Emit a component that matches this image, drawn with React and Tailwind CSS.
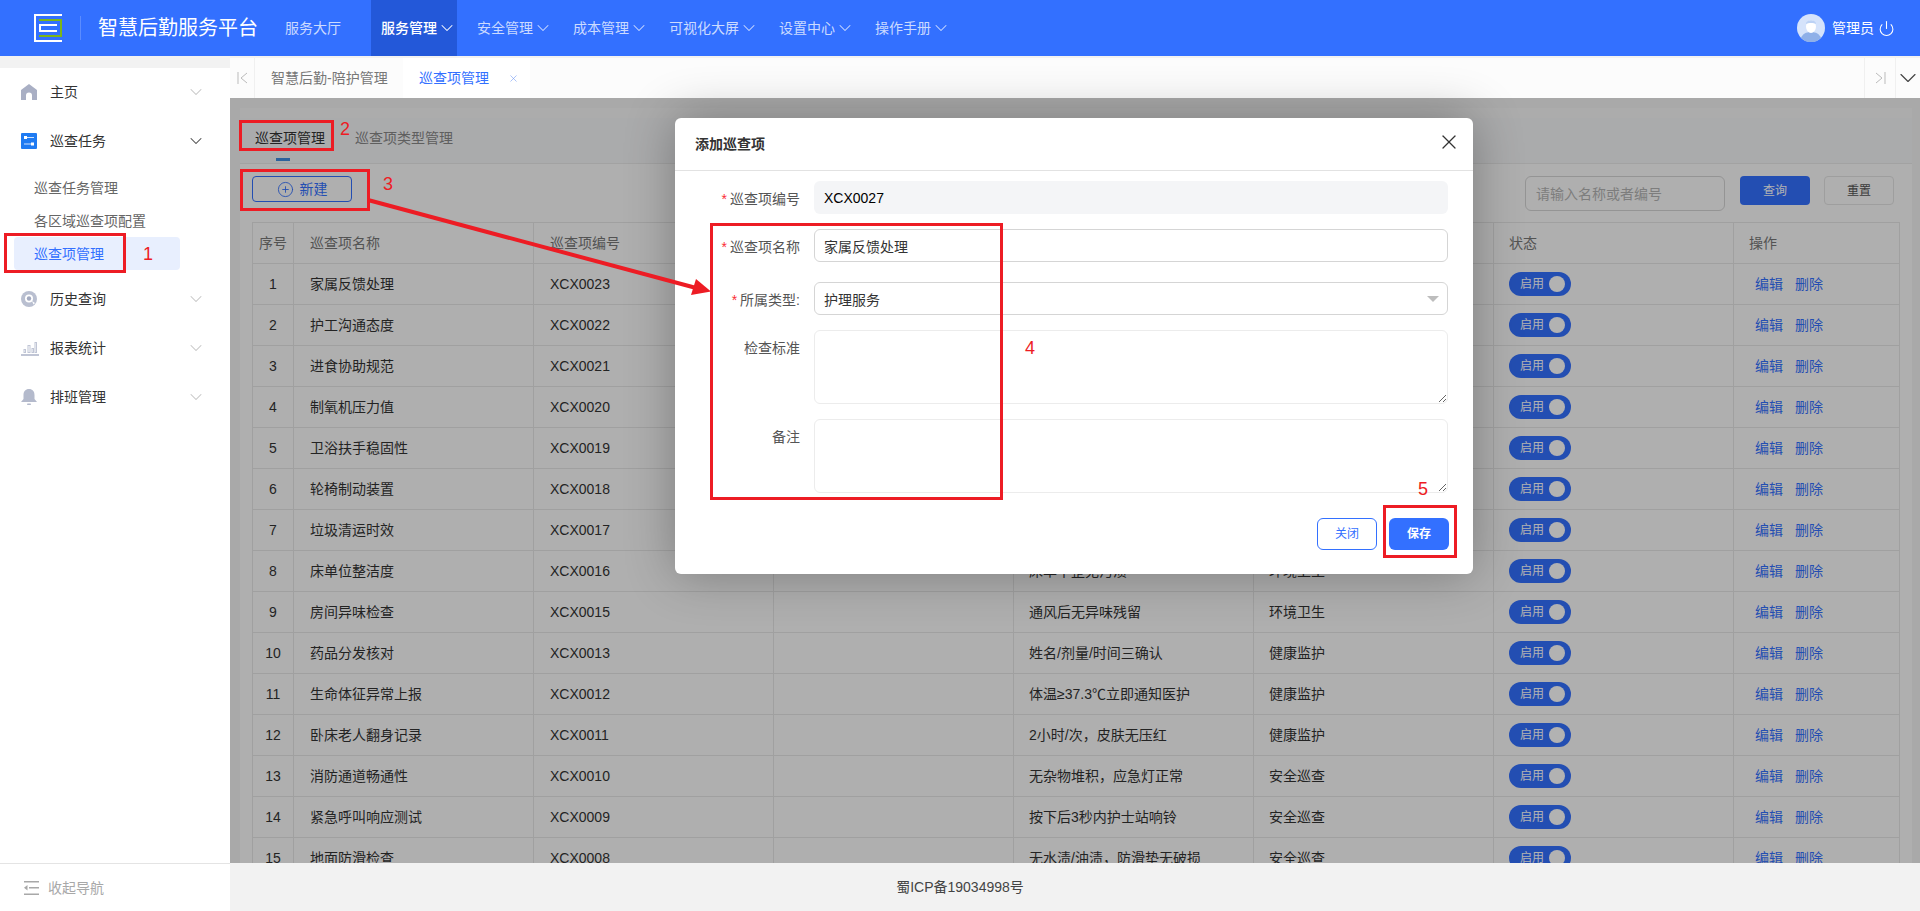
import { ChevronDown, CirclePlus, Power, X } from 'lucide-react';

const MENUS = [
  { label: '服务大厅', plain: true },
  { label: '服务管理', active: true },
  { label: '安全管理' },
  { label: '成本管理' },
  { label: '可视化大屏' },
  { label: '设置中心' },
  { label: '操作手册' },
];

const ROWS = [
  ['家属反馈处理', 'XCX0023', '及时响应家属意见', '护理服务'],
  ['护工沟通态度', 'XCX0022', '语气温和，耐心解答', '护理服务'],
  ['进食协助规范', 'XCX0021', '按流程协助进食', '护理服务'],
  ['制氧机压力值', 'XCX0020', '压力值在正常范围', '设备巡检'],
  ['卫浴扶手稳固性', 'XCX0019', '扶手无松动', '设备巡检'],
  ['轮椅制动装置', 'XCX0018', '制动灵敏有效', '设备巡检'],
  ['垃圾清运时效', 'XCX0017', '每日按时清运', '环境卫生'],
  ['床单位整洁度', 'XCX0016', '床单平整无污渍', '环境卫生'],
  ['房间异味检查', 'XCX0015', '通风后无异味残留', '环境卫生'],
  ['药品分发核对', 'XCX0013', '姓名/剂量/时间三确认', '健康监护'],
  ['生命体征异常上报', 'XCX0012', '体温≥37.3℃立即通知医护', '健康监护'],
  ['卧床老人翻身记录', 'XCX0011', '2小时/次，皮肤无压红', '健康监护'],
  ['消防通道畅通性', 'XCX0010', '无杂物堆积，应急灯正常', '安全巡查'],
  ['紧急呼叫响应测试', 'XCX0009', '按下后3秒内护士站响铃', '安全巡查'],
  ['地面防滑检查', 'XCX0008', '无水渍/油渍，防滑垫无破损', '安全巡查'],
];

const Logo = () => (
  <svg width="28" height="28" viewBox="0 0 28 28" fill="none">
    <path d="M28 1H1v26h27" stroke="#fff" strokeWidth="2" />
    <path d="M5 6h22v16H5" stroke="#7cb518" strokeWidth="2" />
    <path d="M23 11H6v6h17" stroke="#fff" strokeWidth="2" />
  </svg>
);

const HomeIcon = () => (
  <svg width="16" height="16" viewBox="0 0 16 16" fill="#a9afc4">
    <path d="M8 0 16 6v10h-5v-4.500a3 3 0 0 0-6 0V16H0V6z" />
  </svg>
);

const TaskIcon = () => (
  <svg width="16" height="16" viewBox="0 0 16 16">
    <rect width="16" height="16" rx="1" fill="#1f7bf2" />
    <rect x="3" y="3" width="3" height="3" fill="#fff" />
    <rect x="6" y="4" width="7" height="1" fill="#cfe2fd" />
    <rect x="3" y="10.500" width="7" height="1" fill="#cfe2fd" />
    <rect x="10" y="9.500" width="3" height="3" fill="#fff" />
  </svg>
);

const HistoryIcon = () => (
  <svg width="16" height="16" viewBox="0 0 16 16">
    <circle cx="8" cy="8" r="8" fill="#b9bfd0" />
    <circle cx="8" cy="7.500" r="4" fill="#fff" />
    <circle cx="8" cy="7.500" r="2.200" fill="#a3aac0" />
    <path d="M11 10l3 2-1.500 1.500z" fill="#fff" />
  </svg>
);

const ChartIcon = () => (
  <svg width="18" height="16" viewBox="0 0 18 16" fill="none" stroke="#c0c5d5">
    <rect x="3" y="9.500" width="1.500" height="3" />
    <rect x="7" y="5.500" width="2" height="7" />
    <rect x="11" y="8.500" width="1.500" height="4" />
    <rect x="14" y="2.500" width="1.500" height="10" />
    <rect x=".5" y="14.500" width="17" height="1" fill="#c0c5d5" />
  </svg>
);

const BellIcon = () => (
  <svg width="16" height="16" viewBox="0 0 16 16" fill="#b4bacc">
    <path d="M8 0c3.500 0 5.500 2.500 5.500 6v4L16 13H0L2.500 10V6C2.500 2.500 4.500 0 8 0z" />
    <rect x="6" y="14.500" width="4" height="1.500" rx=".7" />
  </svg>
);

const CollapseIcon = () => (
  <svg width="15" height="14" viewBox="0 0 15 14" fill="#a8a8a8">
    <rect width="15" height="1.500" />
    <rect x="5" y="6" width="10" height="1.500" />
    <rect y="12.500" width="15" height="1.500" />
    <path d="M3.500 4v5.500L0 6.800z" />
  </svg>
);

const Avatar = () => (
  <svg width="28" height="28" viewBox="0 0 28 28">
    <circle cx="14" cy="14" r="14" fill="#d5e3fb" />
    <path d="M4 24c1.500-4 5-6 10-6s8.500 2 10 6a14 14 0 0 1-20 0z" fill="#8fb0e8" />
    <ellipse cx="14" cy="12.500" rx="5" ry="6.500" fill="#fff" />
    <path d="M9 10c0-5 10-5 10 0-2-1.500-8-1.500-10 0z" fill="#bcd2f5" />
  </svg>
);

const SideItem = ({ icon, label, open }) => (
  <div className="h-[49px] flex items-center pl-[21px] pr-[24px]">
    <div className="w-[29px] shrink-0">{icon}</div>
    <span className="flex-1 text-sm text-[#333]">{label}</span>
    <ChevronDown size={20} strokeWidth={1.25} className={open ? 'text-[#444]' : 'text-[#c4c4c4]'} />
  </div>
);

const Switch = () => (
  <div className="w-[62px] h-6 rounded-full bg-[#3370ff] flex items-center pl-[11px] pr-[6px] justify-between">
    <span className="text-xs text-white">启用</span>
    <span className="w-4 h-4 rounded-full bg-white" />
  </div>
);

const Field = ({ label, required, className, children }) => (
  <div className={`flex ${className}`}>
    <div className="w-[125px] h-[33px] shrink-0 text-right text-sm text-[#555] leading-[36px]">
      {required && <span className="text-red-500 mr-[3px]">*</span>}
      {label}
    </div>
    <div className="ml-[14px] flex-1">{children}</div>
  </div>
);

const Mark = ({ className }) => <div className={`absolute border-[3px] border-[#ed1c24] ${className}`} />;
const Num = ({ className, children }) => (
  <span className={`absolute text-[18px] leading-none text-[#ed1c24] ${className}`}>{children}</span>
);

export default function App() {
  return (
    <div className="relative h-screen w-full overflow-hidden flex flex-col bg-[#f2f2f2] font-['Liberation_Sans','Noto_Sans_CJK_SC',sans-serif]">
      <header className="h-14 shrink-0 bg-[#3370ff] flex items-center text-white">
        <div className="ml-[34px]"><Logo /></div>
        <div className="ml-[18px] w-px h-6 bg-white/20" />
        <div className="ml-[17px] text-[20px] w-[167px]">智慧后勤服务平台</div>
        <nav className="ml-[10px] flex gap-[10px] h-full">
          {MENUS.map((m) => (
            <div key={m.label} className={`h-full flex items-center pl-[10px] text-sm ${m.plain ? 'pr-[20px]' : ''} ${m.active ? 'bg-[#2358d9] text-white font-medium' : 'text-white/75'}`}>
              <span>{m.label}</span>
              {!m.plain && <ChevronDown size={20} strokeWidth={1.25} />}
            </div>
          ))}
        </nav>
        <div className="ml-auto mr-[25px] flex items-center">
          <Avatar />
          <span className="ml-[7px] text-sm">管理员</span>
          <Power size={17} strokeWidth={1.5} className="ml-[4px]" />
        </div>
      </header>

      <div className="flex-1 min-h-0 flex">
        <aside className="w-[230px] shrink-0 pt-3 flex flex-col">
          <div className="flex-1 bg-white">
            <div className="-mt-px">
              <SideItem icon={<HomeIcon />} label="主页" />
              <SideItem icon={<TaskIcon />} label="巡查任务" open />
              <div className="pt-[6px] pb-[4px] text-sm text-[#666]">
                <div className="h-[33px] flex items-center pl-[34px]">巡查任务管理</div>
                <div className="h-[33px] flex items-center pl-[34px]">各区域巡查项配置</div>
                <div className="h-[33px] ml-[14px] w-[166px] flex items-center pl-[20px] rounded bg-[#e8effe] text-[#3370ff]">巡查项管理</div>
              </div>
              <SideItem icon={<HistoryIcon />} label="历史查询" />
              <SideItem icon={<ChartIcon />} label="报表统计" />
              <SideItem icon={<BellIcon />} label="排班管理" />
            </div>
          </div>
          <div className="h-12 bg-white border-t border-[#e4e4e4] flex items-center pl-6 text-sm text-[#a8a8a8]">
            <CollapseIcon />
            <span className="ml-[9px]">收起导航</span>
          </div>
        </aside>

        <div className="flex-1 min-w-0 flex flex-col pt-[2px]">
          <div className="h-10 shrink-0 bg-[#fcfcfc] flex items-center text-sm">
            <div className="w-[25px] h-full flex items-center justify-center border-r border-[#f0f0f0] text-[#bbb]">
              <svg width="11" height="12" viewBox="0 0 11 12" fill="none" stroke="currentColor"><path d="M1 0v12M10 1 4 6l6 5" /></svg>
            </div>
            <div className="w-[148px] h-full flex items-center pl-4 text-[#777] bg-[#fcfcfc]">智慧后勤-陪护管理</div>
            <div className="w-[127px] h-full flex items-center pl-4 bg-white text-[#3370ff]">
              <span>巡查项管理</span>
              <X size={11} strokeWidth={1.25} className="ml-[19px] text-[#6f98f5]" />
            </div>
            <div className="ml-auto w-[31px] h-full flex items-center justify-center border-l border-[#f0f0f0] text-[#bbb]">
              <svg width="11" height="12" viewBox="0 0 11 12" fill="none" stroke="currentColor"><path d="M10 0v12M1 1l6 5-6 5" /></svg>
            </div>
            <div className="w-[25px] h-full flex items-center justify-center border-l border-[#f0f0f0] text-[#444]">
              <ChevronDown size={28} strokeWidth={1} className="shrink-0" />
            </div>
          </div>

          <main className="flex-1 min-h-0 overflow-hidden pt-[10px] pl-[10px] pr-2">
            <div className="bg-[#fbfbfb] h-[800px]">
              <div className="h-[10px] bg-[#f7f7f7]" />
              <div className="h-[46px] bg-[#f4f5f7] border-b border-[#e8e8e8] relative pl-[15px] flex gap-[30px] text-sm leading-[41px]">
                <span className="text-[#333]">巡查项管理</span>
                <span className="text-[#888]">巡查项类型管理</span>
                <span className="absolute left-[36px] top-[40px] w-[14px] h-[3px] bg-[#3f8de0]" />
              </div>
              <div className="pt-3 pl-3 pr-[18px] h-[46px] flex items-start box-content">
                <button className="w-[100px] h-[26px] rounded border border-[#3370ff] flex items-center justify-center gap-[6px] text-sm text-[#3370ff]">
                  <CirclePlus size={17} strokeWidth={1.25} />
                  新建
                </button>
                <input placeholder="请输入名称或者编号" className="ml-auto w-[200px] h-[35px] rounded-md border border-[#d4d4d4] bg-transparent px-[10px] text-sm placeholder:text-[#b4b4b4]" />
                <button className="ml-[15px] w-[70px] h-[29px] rounded bg-[#3370ff] text-xs text-white">查询</button>
                <button className="ml-[14px] w-[70px] h-[29px] rounded border border-[#e2e2e2] text-xs text-[#555]">重置</button>
              </div>
              <div className="pl-3 pr-3">
                <table className="w-[1647px] table-fixed border-collapse text-sm text-[#333]">
                  <colgroup>
                    <col className="w-[41px]" />
                    <col className="w-[240px]" />
                    <col className="w-[240px]" />
                    <col className="w-[240px]" />
                    <col className="w-[240px]" />
                    <col className="w-[240px]" />
                    <col className="w-[240px]" />
                    <col className="w-[166px]" />
                  </colgroup>
                  <thead className="text-[#777]">
                    <tr className="h-[41px]">
                      <th className="border border-[#e6e6e6] font-normal text-center">序号</th>
                      <th className="border border-[#e6e6e6] font-normal text-left pl-4">巡查项名称</th>
                      <th className="border border-[#e6e6e6] font-normal text-left pl-4">巡查项编号</th>
                      <th className="border border-[#e6e6e6] font-normal text-left pl-[15px]">备注</th>
                      <th className="border border-[#e6e6e6] font-normal text-left pl-[15px]">检查标准</th>
                      <th className="border border-[#e6e6e6] font-normal text-left pl-[15px]">所属类型</th>
                      <th className="border border-[#e6e6e6] font-normal text-left pl-[15px]">状态</th>
                      <th className="border border-[#e6e6e6] font-normal text-left pl-[15px]">操作</th>
                    </tr>
                  </thead>
                  <tbody>
                    {ROWS.map((r, i) => (
                      <tr key={r[1]} className="h-[41px]">
                        <td className="border border-[#e6e6e6] text-center">{i + 1}</td>
                        <td className="border border-[#e6e6e6] pl-4">{r[0]}</td>
                        <td className="border border-[#e6e6e6] pl-4">{r[1]}</td>
                        <td className="border border-[#e6e6e6]" />
                        <td className="border border-[#e6e6e6] pl-[15px]">{r[2]}</td>
                        <td className="border border-[#e6e6e6] pl-[15px]">{r[3]}</td>
                        <td className="border border-[#e6e6e6] pl-[15px]"><Switch /></td>
                        <td className="border border-[#e6e6e6] pl-[21px] text-[#3370ff]">
                          <span>编辑</span>
                          <span className="ml-3">删除</span>
                        </td>
                      </tr>
                    ))}
                  </tbody>
                </table>
              </div>
            </div>
          </main>

          <footer className="h-12 shrink-0 flex items-center justify-center pr-[230px] text-sm text-[#444]">蜀ICP备19034998号</footer>
        </div>
      </div>

      {/* dim layer + dialog */}
      <div className="absolute left-[230px] right-0 top-[98px] bottom-12 bg-black/30 flex justify-center pt-5 pr-[2px]">
        <div className="w-[798px] h-[456px] rounded-md bg-white shadow-[0_0_50px_rgba(0,0,0,0.3)]">
          <div className="h-[53px] border-b border-[#e2e2e2] flex items-center justify-between pl-5 pr-3">
            <span className="text-sm font-bold text-[#333]">添加巡查项</span>
            <X size={24} strokeWidth={1.25} className="text-[#333] -mt-[5px]" />
          </div>
          <Field label="巡查项编号" required className="mt-[10px] pr-[25px]">
            <input readOnly defaultValue="XCX0027" className="w-full h-[33px] rounded-md bg-[#f4f5f7] px-[10px] text-sm text-black" />
          </Field>
          <Field label="巡查项名称" required className="mt-[15px] pr-[25px]">
            <input readOnly defaultValue="家属反馈处理" className="w-full h-[33px] rounded-md border border-[#d5d5d5] px-[9px] text-sm text-[#333]" />
          </Field>
          <Field label="所属类型:" required className="mt-5 pr-[25px]">
            <div className="relative">
              <input readOnly defaultValue="护理服务" className="w-full h-[33px] rounded-md border border-[#d5d5d5] px-[9px] text-sm text-[#333]" />
              <span className="absolute right-[9px] top-[14px] w-0 h-0 border-x-[6px] border-x-transparent border-t-[6px] border-t-[#bdbdbd]" />
            </div>
          </Field>
          <Field label="检查标准" className="mt-[15px] pr-[25px]">
            <textarea readOnly className="block w-full h-[74px] rounded-md border border-[#ececec] px-[9px] text-sm" />
          </Field>
          <Field label="备注" className="mt-[15px] pr-[25px]">
            <textarea readOnly className="block w-full h-[74px] rounded-md border border-[#ececec] px-[9px] text-sm" />
          </Field>
          <div className="mt-[25px] pr-6 flex justify-end gap-3">
            <button className="w-[60px] h-8 rounded-md border border-[#3370ff] text-xs text-[#3370ff]">关闭</button>
            <button className="w-[60px] h-8 rounded-md bg-[#3370ff] text-xs font-bold text-white">保存</button>
          </div>
        </div>
      </div>

      {/* red annotations drawn on the screenshot */}
      <Mark className="left-1 top-[233px] w-[122px] h-[40px]" />
      <Mark className="left-[239px] top-[120px] w-[95px] h-[31px]" />
      <Mark className="left-[240px] top-[169px] w-[130px] h-[42px]" />
      <Mark className="left-[710px] top-[223px] w-[293px] h-[277px]" />
      <Mark className="left-[1383px] top-[505px] w-[74px] h-[53px]" />
      <Num className="left-[143px] top-[245px]">1</Num>
      <Num className="left-[340px] top-[120px]">2</Num>
      <Num className="left-[383px] top-[175px]">3</Num>
      <Num className="left-[1025px] top-[339px]">4</Num>
      <Num className="left-[1418px] top-[480px]">5</Num>
      <svg className="absolute left-0 top-0 pointer-events-none" width="1920" height="911" fill="none">
        <path d="M368 200 700 289" stroke="#ed1c24" strokeWidth="4" />
        <path d="M711 291.500 696 279 691 295z" fill="#ed1c24" />
      </svg>
    </div>
  );
}
